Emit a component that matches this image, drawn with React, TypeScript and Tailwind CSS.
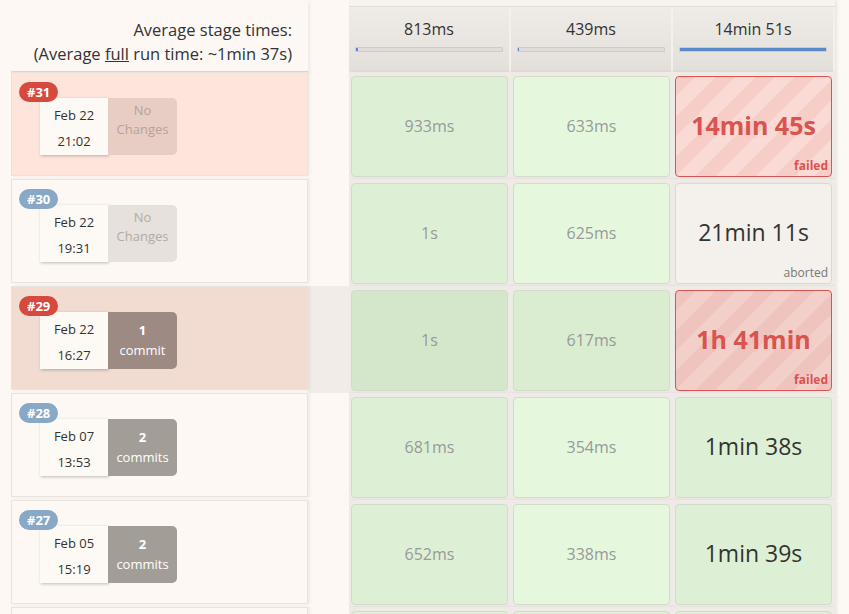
import React from "react";

type Cell = { text: string; status?: "ok" | "failed" | "aborted" };

type Run = {
  id: number;
  failed: boolean;
  date: string;
  time: string;
  commits: number;
  hover?: boolean;
  cells: Cell[];
};

const runs: Run[] = [
  {
    id: 31,
    failed: true,
    date: "Feb 22",
    time: "21:02",
    commits: 0,
    cells: [{ text: "933ms" }, { text: "633ms" }, { text: "14min 45s", status: "failed" }],
  },
  {
    id: 30,
    failed: false,
    date: "Feb 22",
    time: "19:31",
    commits: 0,
    cells: [{ text: "1s" }, { text: "625ms" }, { text: "21min 11s", status: "aborted" }],
  },
  {
    id: 29,
    failed: true,
    date: "Feb 22",
    time: "16:27",
    commits: 1,
    hover: true,
    cells: [{ text: "1s" }, { text: "617ms" }, { text: "1h 41min", status: "failed" }],
  },
  {
    id: 28,
    failed: false,
    date: "Feb 07",
    time: "13:53",
    commits: 2,
    cells: [{ text: "681ms" }, { text: "354ms" }, { text: "1min 38s", status: "ok" }],
  },
  {
    id: 27,
    failed: false,
    date: "Feb 05",
    time: "15:19",
    commits: 2,
    cells: [{ text: "652ms" }, { text: "338ms" }, { text: "1min 39s", status: "ok" }],
  },
];

const averages = [
  { text: "813ms", fill: "w-[2px]" },
  { text: "439ms", fill: "w-[1px]" },
  { text: "14min 51s", fill: "w-full" },
];

export default function App() {
  return (
    <div className="h-[614px] w-[849px] overflow-hidden bg-[#fdf8f3] font-['Open_Sans',sans-serif] text-[#333]">
      <div className="flex h-[72px]">
        <div className="ml-[11px] w-[297px] border-b border-[#e3d9d1] pr-[16px] pt-[18px] text-right text-[16.5px] leading-[24px] text-[#333] shadow-[2px_2px_3px_rgba(0,0,0,0.06)]">
          <div>Average stage times:</div>
          <div>
            (Average <span className="underline">full</span> run time: ~1min 37s)
          </div>
        </div>
        <div className="w-[41px]" />
        <div className="flex w-[486px] flex-col shadow-[2px_0_3px_rgba(0,0,0,0.08)]">
          <div className="h-[7px] border-b border-[#e2ddd7] bg-[#f7f3ef]" />
          <div className="flex flex-1 bg-[#f4f0ec]">
            {averages.map((a) => (
              <div
                key={a.text}
                className="mr-[2px] flex w-[160px] flex-col items-center bg-gradient-to-b from-[#efebe7] to-[#e3dfda] px-[6px] pt-[11px]"
              >
                <div className="text-[16px] leading-[23px]">{a.text}</div>
                <div className="mt-[6px] h-[5px] w-full rounded-[1px] border border-[#cfcac4] bg-[#e0dcd7]">
                  <div className={`h-full bg-[#5b8acb] ${a.fill}`} />
                </div>
              </div>
            ))}
          </div>
        </div>
      </div>

      {runs.map((run) => (
        <RunRow key={run.id} run={run} />
      ))}

      <div className="flex h-[107px]">
        <div className="ml-[11px] h-[104px] w-[297px] border border-[#e9e3dd] shadow-[2px_0_3px_rgba(0,0,0,0.06)]" />
        <div className="w-[41px]" />
        <div className="flex w-[486px] bg-[#eeeae5] pt-[4px] shadow-[2px_0_3px_rgba(0,0,0,0.08)]">
          {[0, 1, 2].map((i) => (
            <div key={i} className="ml-[2px] mr-[3px] h-[101px] w-[157px] rounded-[4px] border border-[#d3dccb] bg-[#ddf0d5]" />
          ))}
        </div>
      </div>
    </div>
  );
}

function RunRow({ run }: { run: Run }) {
  const leftBg = run.hover ? "bg-[#f2dbd1]" : run.failed ? "bg-[#fde5dc]" : "bg-[#fdf8f3]";

  return (
    <div className="flex h-[107px]">
      <div
        className={`relative ml-[11px] h-[104px] w-[297px] border border-[#e9e3dd] shadow-[2px_0_3px_rgba(0,0,0,0.06)] ${leftBg}`}
      >
        <span
          className={`absolute left-[7px] top-[9px] z-10 rounded-full px-[8px] text-[13px] font-bold leading-[20px] text-white ${
            run.failed ? "bg-[#d64a3e]" : "bg-[#87a8c7]"
          }`}
        >
          #{run.id}
        </span>
        <div className="absolute left-[28px] top-[25px] flex h-[57px]">
          <div className="w-[68px] bg-[#fdf9f5] pt-[4px] text-center text-[13px] leading-[26px] text-[#333] shadow-[1px_1px_3px_rgba(0,0,0,0.25)]">
            <div>{run.date}</div>
            <div>{run.time}</div>
          </div>
          <Changes run={run} />
        </div>
      </div>
      <div className={`w-[41px] ${run.hover ? "bg-[#f1ece7]" : ""}`} />
      <div className="flex w-[486px] bg-[#eeeae5] pt-[4px] shadow-[2px_0_3px_rgba(0,0,0,0.08)]">
        {run.cells.map((c, i) => (
          <StageCell key={i} cell={c} col={i} hover={run.hover} />
        ))}
      </div>
    </div>
  );
}

function Changes({ run }: { run: Run }) {
  if (run.commits === 0) {
    return (
      <div
        className={`w-[69px] rounded-r-[5px] pt-[3px] text-center text-[13px] leading-[19px] ${
          run.failed ? "bg-[#e8cdc4] text-[#b5a29b]" : "bg-[#e6e1dc] text-[#b3aba5]"
        }`}
      >
        <div>No</div>
        <div>Changes</div>
      </div>
    );
  }
  return (
    <div
      className={`w-[69px] rounded-r-[5px] pt-[8px] text-center text-[13px] leading-[20px] text-white ${
        run.hover ? "bg-[#9d8a83]" : "bg-[#a39d98]"
      }`}
    >
      <div className="font-bold">{run.commits}</div>
      <div>{run.commits === 1 ? "commit" : "commits"}</div>
    </div>
  );
}

function StageCell({ cell, col, hover }: { cell: Cell; col: number; hover?: boolean }) {
  const base = "relative ml-[2px] mr-[3px] flex h-[101px] w-[157px] items-center justify-center rounded-[4px] border";

  if (cell.status === "failed") {
    return (
      <div
        className={`${base} border-[#d9534f] ${
          hover
            ? "bg-[repeating-linear-gradient(135deg,#efc4be_0,#efc4be_14px,#f2d0c9_14px,#f2d0c9_28px)]"
            : "bg-[repeating-linear-gradient(135deg,#f7cdc8_0,#f7cdc8_14px,#fadad4_14px,#fadad4_28px)]"
        }`}
      >
        <span className="pb-[2px] text-[25px] font-bold text-[#d9534f]">{cell.text}</span>
        <span className="absolute bottom-[2px] right-[3px] text-[12px] font-bold leading-[16px] text-[#d9534f]">
          failed
        </span>
      </div>
    );
  }

  if (cell.status === "aborted") {
    return (
      <div className={`${base} border-[#ddd7d0] bg-[#f4f0eb]`}>
        <span className="pb-[2px] text-[23px] text-[#333]">{cell.text}</span>
        <span className="absolute bottom-[2px] right-[3px] text-[12px] leading-[16px] text-[#777]">aborted</span>
      </div>
    );
  }

  if (cell.status === "ok") {
    return (
      <div className={`${base} border-[#d3dccb] bg-[#ddf0d5]`}>
        <span className="pb-[2px] text-[23px] text-[#333]">{cell.text}</span>
      </div>
    );
  }

  const bg = hover
    ? col === 0
      ? "bg-[#d4e7cb]"
      : "bg-[#dbedd1]"
    : col === 0
      ? "bg-[#ddf0d5]"
      : "bg-[#e5f8dd]";

  return (
    <div className={`${base} border-[#d3dccb] ${bg}`}>
      <span className="pb-[2px] text-[16px] text-[#999]">{cell.text}</span>
    </div>
  );
}
